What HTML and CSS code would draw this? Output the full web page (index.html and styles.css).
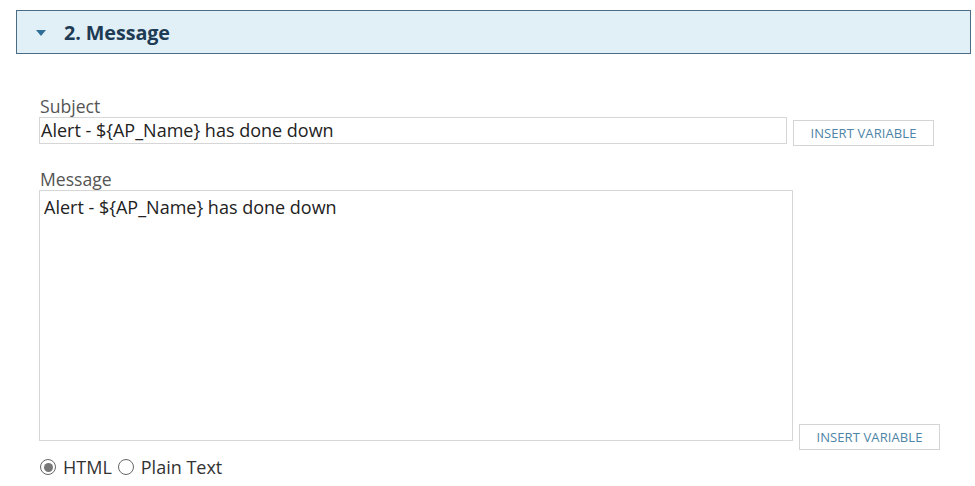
FILE: index.html
```html
<!DOCTYPE html>
<html>
<head>
<meta charset="utf-8">
<link rel="stylesheet" href="styles.css">
</head>
<body>
<div class="section-head">
  <svg class="caret" width="10" height="6" viewBox="0 0 10 6"><path d="M0 0 L10 0 L5 6 Z" fill="#2f6e96"/></svg>
  <span class="section-title">2. Message</span>
</div>
<div class="form">
  <label class="label label-subject">Subject</label>
  <div class="row row-subject">
    <div class="input">Alert - ${AP_Name} has done down</div>
    <button class="btn btn-subject">INSERT VARIABLE</button>
  </div>
  <label class="label label-message">Message</label>
  <div class="row row-message">
    <div class="textarea">Alert - ${AP_Name} has done down</div>
    <button class="btn btn-message">INSERT VARIABLE</button>
  </div>
  <div class="radios">
    <span class="radio checked"></span><span class="radio-text">HTML</span>
    <span class="radio"></span><span class="radio-text">Plain Text</span>
  </div>
</div>
</body>
</html>
```

FILE: styles.css
```css
html, body {
  margin: 0;
  padding: 0;
  background: #ffffff;
  font-family: "Open Sans", "Liberation Sans", sans-serif;
}

.section-head {
  box-sizing: border-box;
  margin: 10px 0 0 16px;
  width: 955px;
  height: 44px;
  background: #e1f0f6;
  border: 1px solid #4b6a84;
  display: flex;
  align-items: center;
  padding-left: 19px;
}

.caret {
  display: block;
  margin-top: 1px;
}

.section-title {
  margin-left: 18px;
  font-size: 19.8px;
  font-weight: 700;
  color: #1e3b55;
  letter-spacing: -0.1px;
}

.form {
  padding-left: 39px;
  display: flex;
  flex-direction: column;
  align-items: flex-start;
}

.label {
  font-size: 17.6px;
  line-height: 22px;
  color: #555555;
  padding-left: 1px;
}

.label-subject {
  margin-top: 41px;
}

.label-message {
  margin-top: 22px;
}

.row {
  display: flex;
}

.input {
  box-sizing: border-box;
  width: 748px;
  height: 27px;
  border: 1px solid #d6d6d6;
  font-size: 18px;
  line-height: 25px;
  color: #222222;
  padding-left: 1px;
  white-space: nowrap;
}

.btn {
  box-sizing: border-box;
  width: 141px;
  height: 26px;
  margin-left: 6px;
  background: #ffffff;
  border: 1px solid #d4d4d4;
  font-family: "Open Sans", "Liberation Sans", sans-serif;
  font-size: 13px;
  color: #4e84a6;
  letter-spacing: 0.1px;
  padding: 0;
}

.btn-subject {
  margin-top: 3px;
}

.row-message {
  align-items: flex-end;
}

.textarea {
  box-sizing: border-box;
  width: 754px;
  height: 251px;
  border: 1px solid #d6d6d6;
  margin-bottom: 9px;
  font-size: 18px;
  line-height: 22px;
  color: #222222;
  padding: 5px 4px;
}

.radios {
  display: flex;
  align-items: center;
  margin-top: 6px;
  font-size: 18px;
  color: #333333;
  height: 22px;
}

.radio {
  box-sizing: border-box;
  width: 16px;
  height: 16px;
  border: 1.5px solid #666666;
  border-radius: 50%;
  display: flex;
  align-items: center;
  justify-content: center;
  margin-right: 7px;
  margin-left: 1px;
}

.radio.checked::after {
  content: "";
  width: 9px;
  height: 9px;
  border-radius: 50%;
  background: #777777;
}

.radio-text {
  margin-right: 5px;
}
```
